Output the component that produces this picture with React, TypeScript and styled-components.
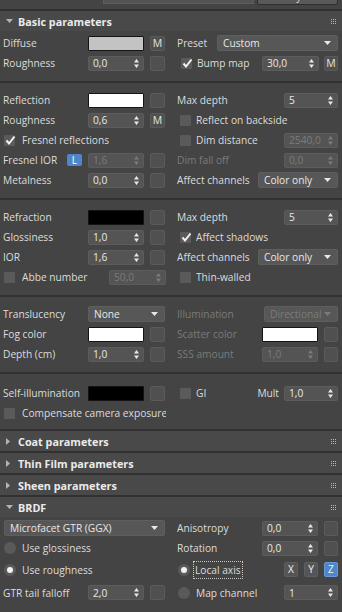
import React from 'react';
import styled, { createGlobalStyle } from 'styled-components';

const GlobalStyle = createGlobalStyle`
  html, body { margin: 0; padding: 0; background: #444444; }
  body {
    font-family: "Open Sans", "Noto Sans", sans-serif;
    font-size: 10.2px;
    color: #dcdcdc;
  }
`;

const Panel = styled.div`
  width: 342px;
  height: 612px;
  overflow: hidden;
  background: #444444;
  display: flex;
  flex-direction: column;
`;

const TopStrip = styled.div`
  height: 9px;
  flex: none;
  overflow: hidden;
  display: flex;
  align-items: flex-end;
`;

const TopRow = styled.div`
  height: 20px;
  width: 100%;
  flex: none;
  display: flex;
  align-items: center;
  padding: 0 4px 0 3px;
  margin-bottom: 3px;
  box-sizing: border-box;
`;

const MatField = styled.div`
  width: 151px;
  height: 16px;
  margin-left: 18px;
  box-sizing: border-box;
  background: #545454;
  border: 1px solid #5e5e5e;
`;

const MatButton = styled.div`
  flex: 1;
  height: 17px;
  margin-left: 3px;
  box-sizing: border-box;
  background: #595959;
  border: 1px solid #2e2e2e;
  border-radius: 2px;
  text-align: center;
  line-height: 15px;
`;

const Rollout = styled.div`
  border-top: 2px solid #313131;
  flex: none;
`;

const RolloutHead = styled.div`
  height: 20px;
  display: flex;
  align-items: center;
  background: #494949;
  padding: 0 6px 0 6px;
  font-weight: 700;
  font-size: 10.8px;
  color: #ebebeb;
`;

const HeadArrow = styled.span`
  width: 12px;
  display: flex;
  align-items: center;
  color: #b4b4b4;
`;

const HeadTitle = styled.span`
  flex: 1;
`;

const Block = styled.div<{ $pt: number; $pb: number }>`
  padding: ${p => p.$pt}px 0 ${p => p.$pb}px;
`;

const Divider = styled.div`
  height: 2px;
  background: #313131;
`;

const Grid = styled.div<{ $rows?: string }>`
  display: grid;
  grid-template-columns: 163px 161px;
  column-gap: 11px;
  padding: 0 4px 0 3px;
  grid-auto-rows: 20px;
  ${p => (p.$rows ? `grid-template-rows: ${p.$rows};` : '')}
`;

const Cell = styled.div`
  display: flex;
  align-items: center;
  min-width: 0;
  white-space: nowrap;
`;

const Label = styled.span<{ $w?: number; $off?: boolean; $ml?: number }>`
  ${p => (p.$w ? `flex: 0 0 ${p.$w}px;` : 'flex: 1;')}
  margin-left: ${p => p.$ml ?? 0}px;
  color: ${p => (p.$off ? '#7b7b7b' : '#dcdcdc')};
  overflow: hidden;
`;

const Swatch = styled.div<{ $w: number; $color: string }>`
  flex: none;
  width: ${p => p.$w}px;
  height: 15px;
  box-sizing: border-box;
  background: ${p => p.$color};
  border: 1px solid #141414;
  border-radius: 1px;
`;

const Slot = styled.div<{ $w?: number; $ml?: number }>`
  flex: none;
  width: ${p => p.$w ?? 15}px;
  height: 15px;
  margin-left: ${p => p.$ml ?? 6}px;
  box-sizing: border-box;
  background: #505050;
  border: 1px solid #5b5b5b;
  border-radius: 2px;
  color: #e4e4e4;
  font-size: 10.5px;
  line-height: 13px;
  text-align: center;
`;

const SpinBox = styled.div<{ $w: number; $off?: boolean; $auto?: boolean }>`
  flex: none;
  width: ${p => p.$w}px;
  height: 15px;
  ${p => (p.$auto ? 'margin-left: auto;' : '')}
  box-sizing: border-box;
  display: flex;
  align-items: center;
  justify-content: space-between;
  padding: 0 4px 0 4px;
  background: #545454;
  border: 1px solid #5c5c5c;
  border-radius: 2px;
  color: ${p => (p.$off ? '#7b7b7b' : '#e8e8e8')};
`;

const DropBox = styled.div<{ $w: number; $off?: boolean }>`
  flex: none;
  width: ${p => p.$w}px;
  height: 16px;
  box-sizing: border-box;
  display: flex;
  align-items: center;
  justify-content: space-between;
  padding: 0 6px 0 5px;
  background: #575757;
  border: 1px solid #5e5e5e;
  border-radius: 2px;
  color: ${p => (p.$off ? '#7b7b7b' : '#e8e8e8')};
`;

const CheckBox = styled.div<{ $ml?: number }>`
  flex: none;
  position: relative;
  width: 11px;
  height: 11px;
  margin-left: ${p => p.$ml ?? 1}px;
  background: #5a5a5a;
  border-radius: 1px;
`;

const CheckMark = styled.svg`
  position: absolute;
  left: 1px;
  top: 0;
`;

const Radio = styled.div<{ $on?: boolean; $ml?: number }>`
  flex: none;
  width: 12px;
  height: 12px;
  margin-left: ${p => p.$ml ?? 1}px;
  border-radius: 50%;
  background: #5a5a5a;
  display: flex;
  align-items: center;
  justify-content: center;
  &::after {
    content: '';
    display: ${p => (p.$on ? 'block' : 'none')};
    width: 6px;
    height: 6px;
    border-radius: 50%;
    background: #f2f2f2;
  }
`;

const Focus = styled.span`
  margin-left: 3px;
  padding: 1px 1px;
  border: 1px dotted #c8c8c8;
`;

const AxisBtn = styled.div<{ $on?: boolean; $auto?: boolean }>`
  flex: none;
  width: 14px;
  height: 15px;
  margin-left: ${p => (p.$auto ? 'auto' : '6px')};
  box-sizing: border-box;
  border-radius: 2px;
  background: ${p => (p.$on ? '#4f86c8' : '#555555')};
  border: 1px solid ${p => (p.$on ? '#6a9ad4' : '#5e5e5e')};
  color: #f0f0f0;
  text-align: center;
  line-height: 13px;
`;

const LockBtn = styled.div`
  flex: none;
  width: 15px;
  height: 12px;
  margin-right: 6px;
  border-radius: 2px;
  background: #4f86c8;
  color: #fff;
  text-align: center;
  line-height: 12px;
`;

const Mult = styled.span`
  margin-left: auto;
  margin-right: 5px;
`;

const Arrows = () => (
  <svg width="5" height="9" viewBox="0 0 5 9">
    <path d="M2.5 0L5 3.5H0zM2.5 9L0 5.5H5z" fill="currentColor" />
  </svg>
);

const DownTri = () => (
  <svg width="7" height="4" viewBox="0 0 7 4">
    <path d="M0 0H7L3.5 4z" fill="currentColor" />
  </svg>
);

const RightTri = () => (
  <svg width="4" height="7" viewBox="0 0 4 7">
    <path d="M0 0L4 3.5L0 7z" fill="currentColor" />
  </svg>
);

const Grip = () => (
  <svg width="5" height="5" viewBox="0 0 5 5">
    {[0, 2, 4].map(x =>
      [0, 2, 4].map(y => <rect key={`${x}${y}`} x={x} y={y} width="1" height="1" fill="#b8b8b8" />)
    )}
  </svg>
);

const Check = ({ on, ml }: { on?: boolean; ml?: number }) => (
  <CheckBox $ml={ml}>
    {on && (
      <CheckMark width="11" height="11" viewBox="0 0 11 11">
        <path d="M1.5 5.5L4 8.5L9.5 1.5" stroke="#f4f4f4" strokeWidth="2" fill="none" />
      </CheckMark>
    )}
  </CheckBox>
);

const Spinner = ({ w, v, off, auto }: { w: number; v: string; off?: boolean; auto?: boolean }) => (
  <SpinBox $w={w} $off={off} $auto={auto}>
    <span>{v}</span>
    <Arrows />
  </SpinBox>
);

const Dropdown = ({ w, v, off }: { w: number; v: string; off?: boolean }) => (
  <DropBox $w={w} $off={off}>
    <span>{v}</span>
    <DownTri />
  </DropBox>
);

const Header = ({ title, open }: { title: string; open?: boolean }) => (
  <RolloutHead>
    <HeadArrow>{open ? <DownTri /> : <RightTri />}</HeadArrow>
    <HeadTitle>{title}</HeadTitle>
    <Grip />
  </RolloutHead>
);

export default function App() {
  return (
    <Panel>
      <GlobalStyle />
      <TopStrip>
        <TopRow>
          <Label $w={76}>GI material:</Label>
          <svg width="6" height="6" viewBox="0 0 6 6">
            <path d="M0 6L6 0" stroke="#cfcfcf" strokeWidth="1.2" />
          </svg>
          <MatField />
          <MatButton>Mayne</MatButton>
        </TopRow>
      </TopStrip>

      <Rollout>
        <Header title="Basic parameters" open />
        <Block $pt={2} $pb={8}>
          <Grid>
            <Cell>
              <Label $w={85}>Diffuse</Label>
              <Swatch $w={56} $color="#c3c3c3" />
              <Slot>M</Slot>
            </Cell>
            <Cell>
              <Label>Preset</Label>
              <Dropdown w={121} v="Custom" />
            </Cell>
            <Cell>
              <Label $w={85}>Roughness</Label>
              <Spinner w={56} v="0,0" />
              <Slot />
            </Cell>
            <Cell>
              <Check on ml={4} />
              <Label $ml={5}>Bump map</Label>
              <Spinner w={57} v="30,0" />
              <Slot $w={14} $ml={5}>M</Slot>
            </Cell>
          </Grid>
        </Block>
        <Divider />
        <Block $pt={7} $pb={8}>
          <Grid>
            <Cell>
              <Label $w={85}>Reflection</Label>
              <Swatch $w={56} $color="#ffffff" />
              <Slot />
            </Cell>
            <Cell>
              <Label>Max depth</Label>
              <Spinner w={54} v="5" />
            </Cell>
            <Cell>
              <Label $w={85}>Roughness</Label>
              <Spinner w={56} v="0,6" />
              <Slot>M</Slot>
            </Cell>
            <Cell>
              <Check ml={3} />
              <Label $ml={5}>Reflect on backside</Label>
            </Cell>
            <Cell>
              <Check on />
              <Label $ml={7}>Fresnel reflections</Label>
            </Cell>
            <Cell>
              <Check ml={3} />
              <Label $ml={5}>Dim distance</Label>
              <Spinner w={54} v="2540,0" off />
            </Cell>
            <Cell>
              <Label $w={64}>Fresnel IOR</Label>
              <LockBtn>L</LockBtn>
              <Spinner w={56} v="1,6" off />
              <Slot />
            </Cell>
            <Cell>
              <Label $off>Dim fall off</Label>
              <Spinner w={54} v="0,0" off />
            </Cell>
            <Cell>
              <Label $w={85}>Metalness</Label>
              <Spinner w={56} v="0,0" />
              <Slot />
            </Cell>
            <Cell>
              <Label>Affect channels</Label>
              <Dropdown w={80} v="Color only" />
            </Cell>
          </Grid>
        </Block>
        <Divider />
        <Block $pt={7} $pb={8}>
          <Grid>
            <Cell>
              <Label $w={85}>Refraction</Label>
              <Swatch $w={56} $color="#000000" />
              <Slot />
            </Cell>
            <Cell>
              <Label>Max depth</Label>
              <Spinner w={54} v="5" />
            </Cell>
            <Cell>
              <Label $w={85}>Glossiness</Label>
              <Spinner w={56} v="1,0" />
              <Slot />
            </Cell>
            <Cell>
              <Check on ml={3} />
              <Label $ml={5}>Affect shadows</Label>
            </Cell>
            <Cell>
              <Label $w={85}>IOR</Label>
              <Spinner w={56} v="1,6" />
              <Slot />
            </Cell>
            <Cell>
              <Label>Affect channels</Label>
              <Dropdown w={80} v="Color only" />
            </Cell>
            <Cell>
              <Check />
              <Label $ml={7}>Abbe number</Label>
              <Spinner w={57} v="50,0" off />
            </Cell>
            <Cell>
              <Check ml={3} />
              <Label $ml={5}>Thin-walled</Label>
            </Cell>
          </Grid>
        </Block>
        <Divider />
        <Block $pt={7} $pb={8}>
          <Grid>
            <Cell>
              <Label $w={85}>Translucency</Label>
              <Dropdown w={77} v="None" />
            </Cell>
            <Cell>
              <Label $off>Illumination</Label>
              <Dropdown w={74} v="Directional" off />
            </Cell>
            <Cell>
              <Label $w={85}>Fog color</Label>
              <Swatch $w={56} $color="#ffffff" />
              <Slot />
            </Cell>
            <Cell>
              <Label $off>Scatter color</Label>
              <Swatch $w={56} $color="#ffffff" />
              <Slot $w={14} />
            </Cell>
            <Cell>
              <Label $w={85}>Depth (cm)</Label>
              <Spinner w={56} v="1,0" />
              <Slot />
            </Cell>
            <Cell>
              <Label $off>SSS amount</Label>
              <Spinner w={56} v="1,0" off />
              <Slot $w={14} />
            </Cell>
          </Grid>
        </Block>
        <Divider />
        <Block $pt={9} $pb={6}>
          <Grid>
            <Cell>
              <Label $w={85}>Self-illumination</Label>
              <Swatch $w={56} $color="#000000" />
              <Slot />
            </Cell>
            <Cell>
              <Check ml={3} />
              <Label $w={20} $ml={5}>GI</Label>
              <Mult>Mult</Mult>
              <Spinner w={54} v="1,0" />
            </Cell>
            <Cell>
              <Check />
              <Label $ml={7}>Compensate camera exposure</Label>
            </Cell>
            <Cell />
          </Grid>
        </Block>
      </Rollout>

      <Rollout>
        <Header title="Coat parameters" />
      </Rollout>
      <Rollout>
        <Header title="Thin Film parameters" />
      </Rollout>
      <Rollout>
        <Header title="Sheen parameters" />
      </Rollout>
      <Rollout>
        <Header title="BRDF" open />
        <Block $pt={1} $pb={4}>
          <Grid $rows="20px 20px 23px 23px">
            <Cell>
              <Label $w={1} />
              <Dropdown w={161} v="Microfacet GTR (GGX)" />
            </Cell>
            <Cell>
              <Label>Anisotropy</Label>
              <Spinner w={56} v="0,0" />
              <Slot $w={14} />
            </Cell>
            <Cell>
              <Radio />
              <Label $ml={6}>Use glossiness</Label>
            </Cell>
            <Cell>
              <Label>Rotation</Label>
              <Spinner w={56} v="0,0" />
              <Slot $w={14} />
            </Cell>
            <Cell>
              <Radio $on />
              <Label $ml={6}>Use roughness</Label>
            </Cell>
            <Cell>
              <Radio $on />
              <Focus>Local axis</Focus>
              <AxisBtn $auto>X</AxisBtn>
              <AxisBtn>Y</AxisBtn>
              <AxisBtn $on>Z</AxisBtn>
            </Cell>
            <Cell>
              <Label $w={85}>GTR tail falloff</Label>
              <Spinner w={56} v="2,0" />
              <Slot />
            </Cell>
            <Cell>
              <Radio />
              <Label $ml={6}>Map channel</Label>
              <Spinner w={54} v="1" />
            </Cell>
          </Grid>
        </Block>
      </Rollout>
    </Panel>
  );
}
